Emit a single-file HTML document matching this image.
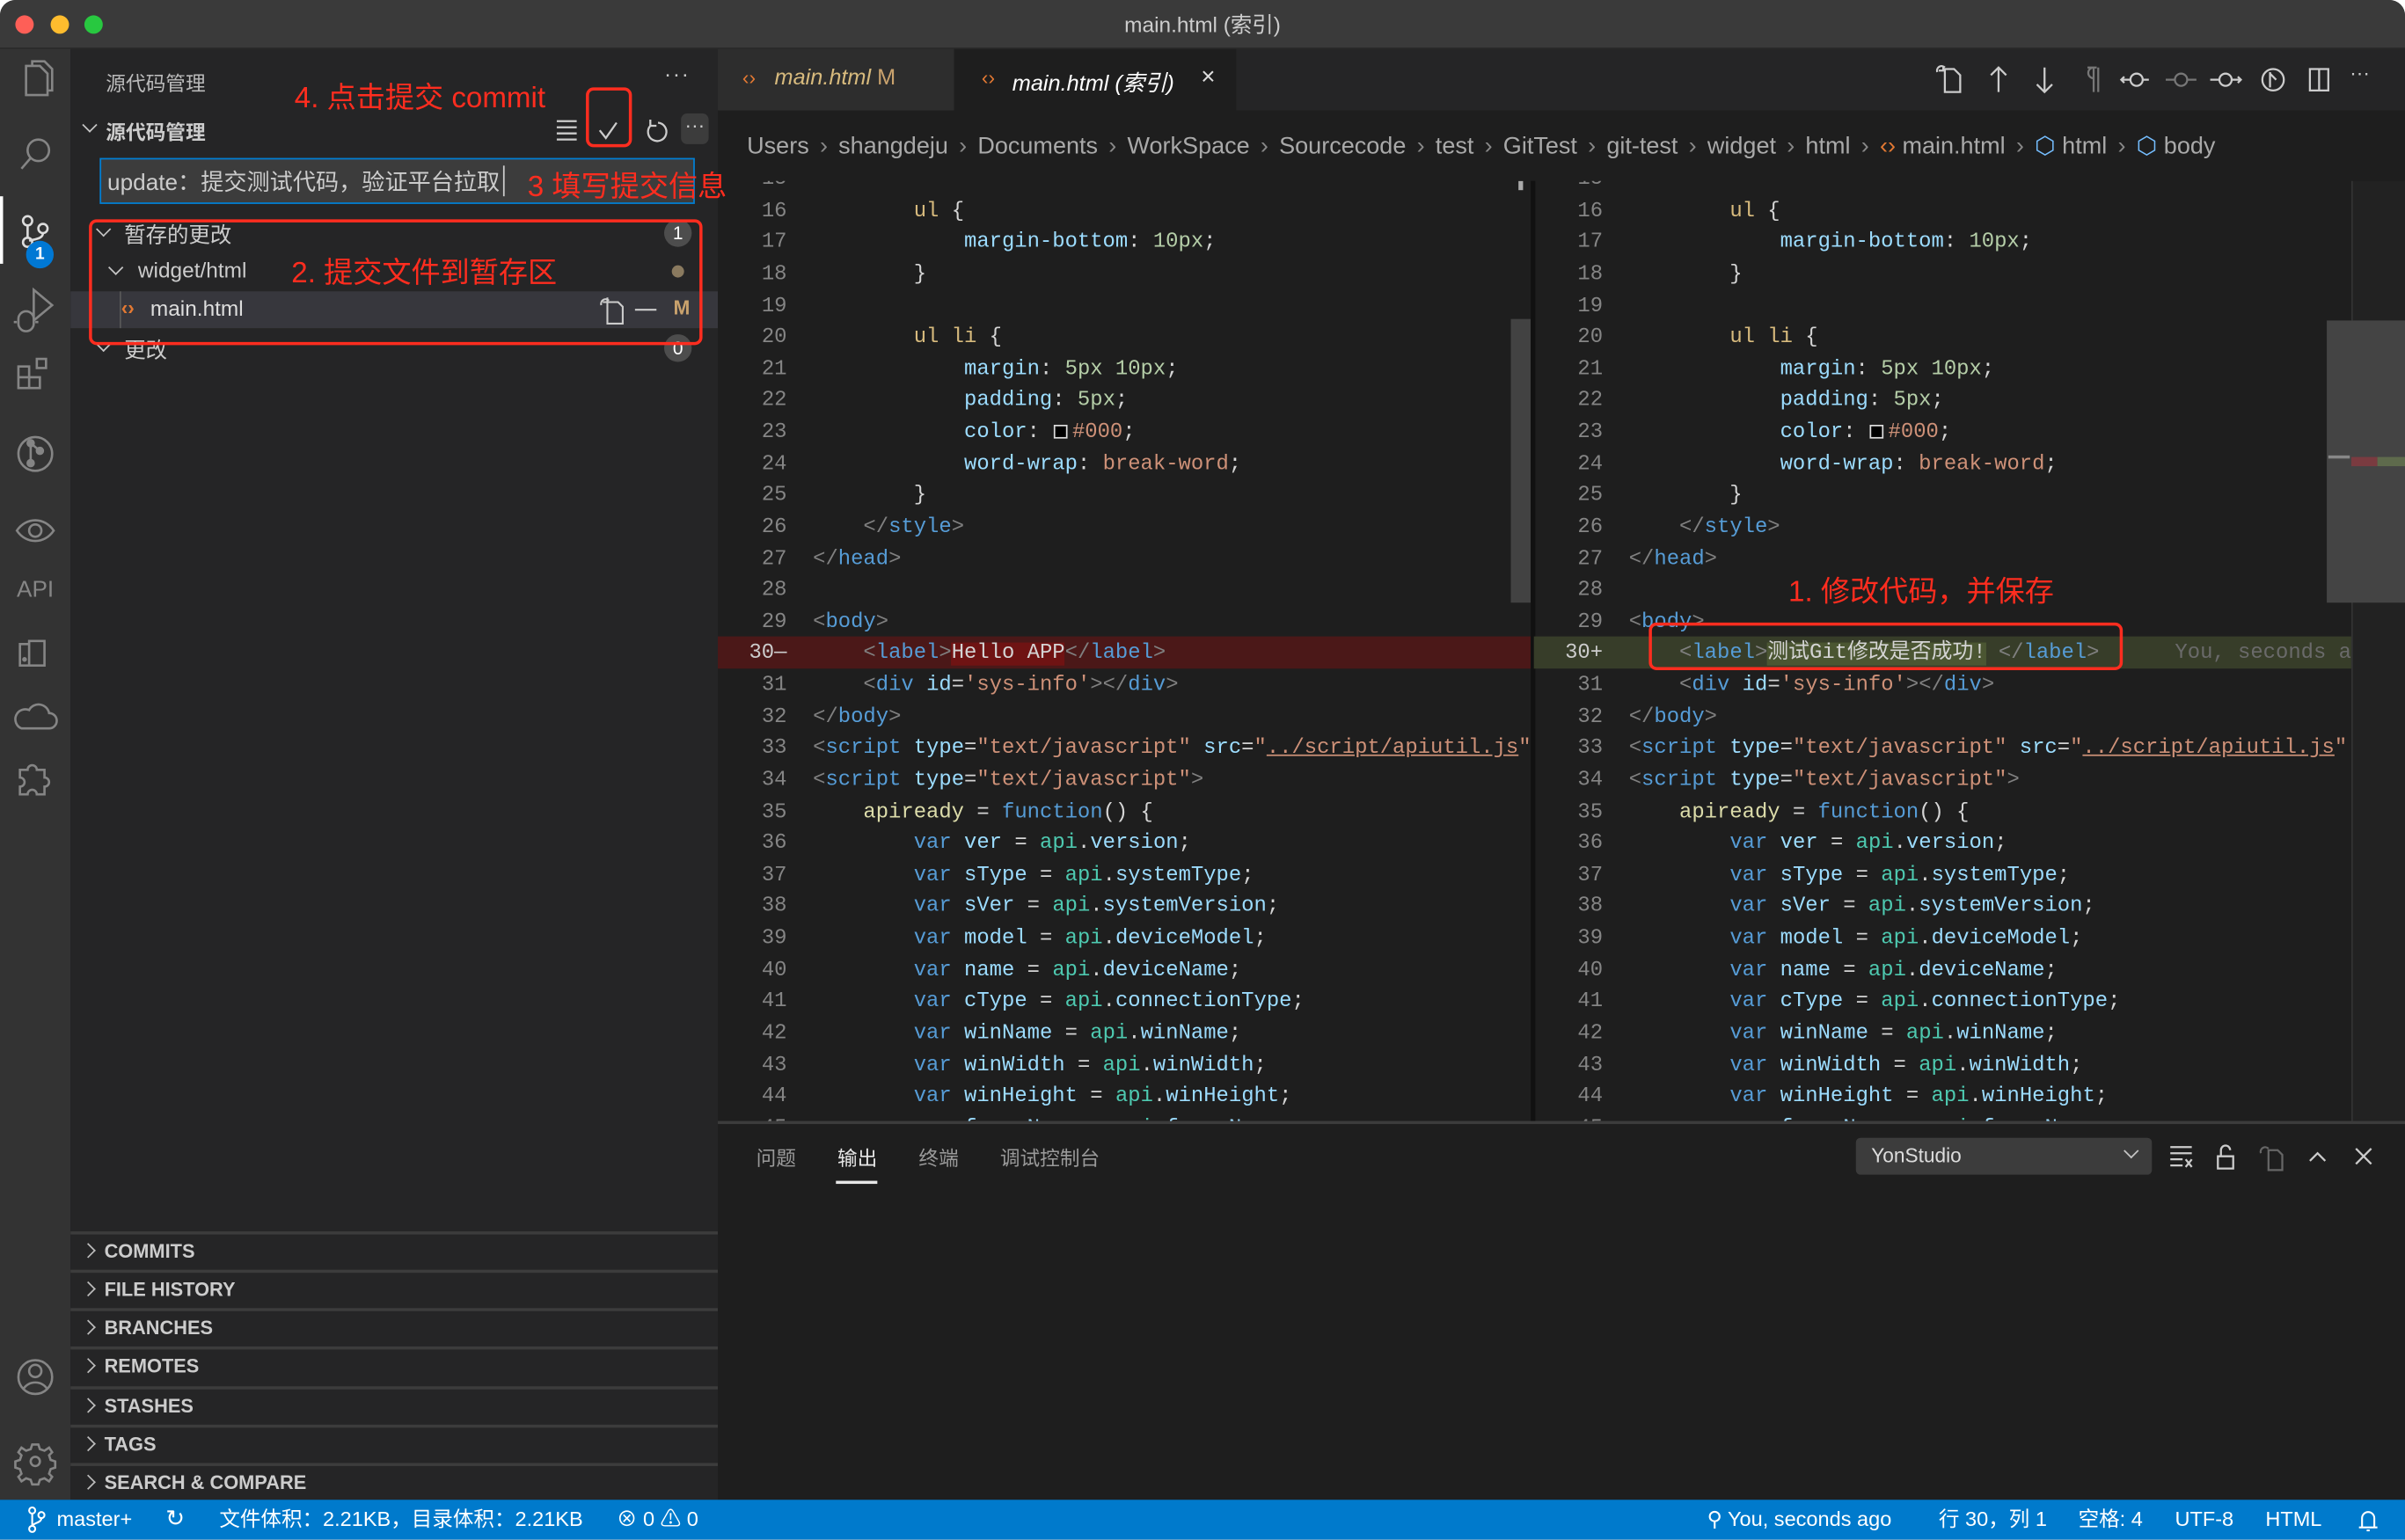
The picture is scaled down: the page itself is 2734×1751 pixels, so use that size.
<!DOCTYPE html>
<html><head><meta charset="utf-8">
<style>
*{box-sizing:border-box;margin:0;padding:0}
html,body{width:2734px;height:1750px;overflow:hidden;background:#fff}
#w{position:absolute;left:0;top:0;width:1568px;height:1004px;transform:scale(1.74362);transform-origin:0 0;background:#1e1e1e;border-radius:10px 10px 0 0;overflow:hidden;font-family:"Liberation Sans","Noto Sans CJK SC",sans-serif;color:#ccc}
.a{position:absolute}
.mono{font-family:"Liberation Mono","Noto Sans CJK SC",monospace;font-size:13.7px}
.red{color:#ff2d1f;font-size:19px;font-family:"Liberation Sans","Noto Sans CJK SC",sans-serif;white-space:nowrap}
.box{position:absolute;border:2.5px solid #ff2d1f;border-radius:5px}
.ln{height:20.64px;line-height:20.64px;position:relative;overflow:visible}
.num{position:absolute;width:45px;text-align:right;color:#858585;left:0;white-space:pre}
.code{position:absolute;left:62px;white-space:pre}
.t{color:#808080}.n{color:#569cd6}.at{color:#9cdcfe}.s{color:#ce9178}.sel{color:#d7ba7d}.nm{color:#b5cea8}.y{color:#dcdcaa}.c{color:#4ec9b0}.wt{color:#d4d4d4}
.sw{display:inline-block;width:9px;height:9px;border:1px solid #ddd;background:#000;margin:0 3px 0 1px;vertical-align:-1px}
.sec{position:absolute;left:46px;width:422px;height:25px;border-top:2px solid #3c3c3c;font-size:12.5px;font-weight:bold;color:#ccc;line-height:23px;padding-left:22px}
.sec:before{content:"";position:absolute;left:8px;top:7px;width:6px;height:6px;border-right:1.3px solid #bbb;border-top:1.3px solid #bbb;transform:rotate(45deg)}
.chev{position:absolute;width:7px;height:7px;border-right:1.3px solid #c5c5c5;border-bottom:1.3px solid #c5c5c5;transform:rotate(45deg)}
.badge{position:absolute;width:18px;height:18px;border-radius:9px;background:#4d4d4d;color:#fff;font-size:12px;text-align:center;line-height:18px}
svg{position:absolute;overflow:visible}
.st{position:absolute;top:0;height:26px;line-height:26px;font-size:13.5px;color:#fff;white-space:nowrap}
.sp{color:#888;margin:0 7px}
</style></head><body><div id="w">

<div class="a" style="left:0;top:0;width:1568px;height:32px;background:#3a3a3a;border-bottom:1px solid #2a2a2a"></div>
<div class="a" style="left:10px;top:10px;width:12px;height:12px;border-radius:6px;background:#fe5f57"></div>
<div class="a" style="left:33px;top:10px;width:12px;height:12px;border-radius:6px;background:#febc2e"></div>
<div class="a" style="left:55px;top:10px;width:12px;height:12px;border-radius:6px;background:#28c840"></div>
<div class="a" style="left:0;width:1568px;top:6px;text-align:center;color:#ccc;font-size:14px">main.html (索引)</div>

<div class="a" style="left:0;top:32px;width:46px;height:946px;background:#333"></div>
<div class="a" style="left:0;top:128px;width:2px;height:44px;background:#fff"></div>
<svg width="46" height="946" style="left:0;top:32px" fill="none" stroke="#858585" stroke-width="1.5">
 <path d="M17 11h9l5 5v14h-14z M21 11v-3h8l5 5v14h-3"/>
 <circle cx="25" cy="66" r="7"/><path d="M20 71l-6 7"/>
 <g stroke="#ddd"><circle cx="18" cy="112" r="3"/><circle cx="28" cy="117" r="3"/><circle cx="18" cy="126" r="3"/><path d="M18 115v8 M28 120c0 4-6 4-9 5"/></g>
 <path d="M22 157l12 10-12 10z M12 176a5 5 0 0 1 10 0v3a5 5 0 0 1-10 0z M11 178h-2 M23 178h2"/>
 <path d="M12 207h7v7h-7z M12 214h7v7h-7z M19 214h7v7h-7z M24 202h6v6h-6z"/>
 <circle cx="23" cy="264" r="11"/><circle cx="20" cy="257" r="2" fill="#858585"/><circle cx="26" cy="262" r="2" fill="#858585"/><circle cx="20" cy="270" r="2" fill="#858585"/><path d="M20 257v13 M20 257l6 5"/>
 <path d="M11 314c6-9 18-9 24 0c-6 9-18 9-24 0z"/><circle cx="23" cy="314" r="4"/>
 <path d="M19 402h-6v-14h6z M19 386h10v16h-10z"/><circle cx="16" cy="398" r="0.8" fill="#858585"/>
 <path d="M14 443h18a5 5 0 0 0 0-10a7 7 0 0 0-13-2a6 6 0 0 0-5 12z"/>
 <path d="M13 470h5a3 3 0 0 1 6 0h5v5a3 3 0 0 1 0 6v5h-5a3 3 0 0 0-6 0h-5v-5a3 3 0 0 0 0-6z"/>
 <circle cx="23" cy="866" r="11"/><circle cx="23" cy="862" r="4"/><path d="M15 874c4-6 12-6 16 0"/>
 <circle cx="23" cy="921" r="3"/><path d="M21 910h4l1 3 3 1 3-2 2 3-2 2 1 3 3 1v4l-3 1-1 3 2 2-2 3-3-2-3 1-1 3h-4l-1-3-3-1-3 2-2-3 2-2-1-3-3-1v-4l3-1 1-3-2-2 2-3 3 2 3-1z"/>
</svg>
<div class="a" style="left:0;top:376px;width:46px;text-align:center;color:#858585;font-size:15px">API</div>
<div class="a" style="left:17px;top:157px;width:18px;height:18px;border-radius:9px;background:#0078d4;color:#fff;font-size:11px;font-weight:bold;text-align:center;line-height:18px">1</div>

<div class="a" style="left:46px;top:32px;width:422px;height:946px;background:#252526"></div>
<div class="a" style="left:69px;top:44px;font-size:13px;color:#bbb">源代码管理</div>
<div class="a" style="left:433px;top:40px;font-size:14px;color:#ccc;letter-spacing:1px">···</div>
<div class="chev" style="left:55px;top:78px"></div>
<div class="a" style="left:69px;top:76px;font-size:13px;font-weight:bold;color:#ccc">源代码管理</div>
<svg width="100" height="30" style="left:360px;top:72px" fill="none" stroke="#ccc" stroke-width="1.3">
 <path d="M3 7h13 M3 11h13 M3 15h13 M3 19h13"/>
 <path d="M31 13l4 5 7-10"/>
 <path d="M69 8a6 6 0 1 1-5 2 M64 6v4h4"/>
</svg>
<div class="a" style="left:444px;top:74px;width:18px;height:20px;background:#3c3c3c;border-radius:4px;color:#ccc;font-size:13px;text-align:center;line-height:16px">···</div>
<div class="a" style="left:65px;top:103px;width:388px;height:30px;background:#3c3c3c;border:1px solid #007fd4"></div>
<div class="a" style="left:70px;top:108px;font-size:15px;color:#ccc;white-space:nowrap">update：提交测试代码，验证平台拉取</div>
<div class="a" style="left:328px;top:108px;width:1px;height:20px;background:#ccc"></div>

<div class="chev" style="left:64px;top:146px"></div>
<div class="a" style="left:81px;top:143px;font-size:14px;color:#ccc">暂存的更改</div>
<div class="badge" style="left:433px;top:143px">1</div>
<div class="chev" style="left:72px;top:171px"></div>
<div class="a" style="left:90px;top:168px;font-size:14px;color:#ccc">widget/html</div>
<div class="a" style="left:438px;top:173px;width:8px;height:8px;border-radius:4px;background:#8a7a5f"></div>
<div class="a" style="left:46px;top:190px;width:422px;height:24px;background:#37373d"></div>
<div class="a" style="left:78px;top:190px;width:1px;height:24px;background:#585858"></div>
<div class="a" style="left:79px;top:193px;font-size:13px;color:#e37933;font-weight:bold">‹›</div>
<div class="a" style="left:98px;top:193px;font-size:14px;color:#ddd">main.html</div>
<svg width="50" height="24" style="left:388px;top:190px" fill="none" stroke="#ccc" stroke-width="1.2"><path d="M8 7h7l3 3v11h-10z M4 9a3 3 0 0 1 5-3 M8 4v3h-3"/><path d="M26 12h14"/></svg>
<div class="a" style="left:439px;top:193px;font-size:13px;color:#c9a26d;font-weight:bold">M</div>
<div class="chev" style="left:64px;top:221px"></div>
<div class="a" style="left:81px;top:218px;font-size:14px;color:#ccc">更改</div>
<div class="badge" style="left:433px;top:218px">0</div>

<div class="sec" style="top:803px">COMMITS</div>
<div class="sec" style="top:828px">FILE HISTORY</div>
<div class="sec" style="top:853px">BRANCHES</div>
<div class="sec" style="top:878px">REMOTES</div>
<div class="sec" style="top:904px">STASHES</div>
<div class="sec" style="top:929px">TAGS</div>
<div class="sec" style="top:954px">SEARCH &amp; COMPARE</div>

<div class="a" style="left:468px;top:32px;width:1100px;height:40px;background:#252526"></div>
<div class="a" style="left:468px;top:32px;width:154px;height:40px;background:#2d2d2d"></div>
<div class="a" style="left:622px;top:32px;width:184px;height:40px;background:#1e1e1e"></div>
<div class="a" style="left:484px;top:43px;font-size:13px;color:#e37933">‹›</div>
<div class="a" style="left:505px;top:43px;font-size:14.5px;color:#d7ba7d;font-style:italic">main.html <span style="font-style:normal;color:#c9a26d">M</span></div>
<div class="a" style="left:640px;top:43px;font-size:13px;color:#e37933">‹›</div>
<div class="a" style="left:660px;top:43px;font-size:14.5px;color:#fff;font-style:italic">main.html (索引)</div>
<div class="a" style="left:783px;top:42px;font-size:16px;color:#ddd">×</div>
<svg width="300" height="40" style="left:1260px;top:32px" fill="none" stroke="#ccc" stroke-width="1.3">
 <path d="M8 13h6l4 4v11h-10z M3 15a3 3 0 0 1 5-3 M7 11v3h-3"/>
 <path d="M43 28v-16 M38 17l5-5 5 5"/>
 <path d="M73 12v16 M68 23l5 5 5-5"/>
 <path stroke="#777" d="M101 12h6 M105 12v16 M108 12v16 M105 12a3 3 0 0 0 0 7"/>
 <circle cx="133" cy="20" r="4"/><path d="M137 20h4 M123 20h6 M125 18l-2 2 2 2"/>
 <circle stroke="#777" cx="162" cy="20" r="4"/><path stroke="#777" d="M152 20h6 M166 20h6"/>
 <circle cx="191" cy="20" r="4"/><path d="M181 20h6 M195 20h6 M199 18l2 2-2 2"/>
 <circle cx="222" cy="20" r="7"/><path d="M220 15v10 M220 16l4 4"/>
 <path d="M246 13h12v14h-12z M252 13v14"/>
</svg>
<div class="a" style="left:1532px;top:40px;color:#ccc;font-size:13px">···</div>

<div class="a" style="left:487px;top:86px;font-size:15.5px;color:#a9a9a9;white-space:nowrap">Users<span class="sp">›</span>shangdeju<span class="sp">›</span>Documents<span class="sp">›</span>WorkSpace<span class="sp">›</span>Sourcecode<span class="sp">›</span>test<span class="sp">›</span>GitTest<span class="sp">›</span>git-test<span class="sp">›</span>widget<span class="sp">›</span>html<span class="sp">›</span><span style="color:#e37933">‹›</span> main.html<span class="sp">›</span><span style="color:#75beff">⬡</span> html<span class="sp">›</span><span style="color:#75beff">⬡</span> body</div>

<div class="a mono" style="left:468px;top:118px;width:530px;height:614px;overflow:hidden">
<div class="a" style="left:0;top:297px;width:530px;height:20.64px;background:#4b1818"></div>
<div style="position:absolute;left:0;top:-10px;width:530px">
<div class="ln"><span class="num">15</span></div>
<div class="ln"><span class="num">16</span><span class="code wt">        <span class="sel">ul</span> {</span></div>
<div class="ln"><span class="num">17</span><span class="code wt">            <span class="at">margin-bottom</span>: <span class="nm">10px</span>;</span></div>
<div class="ln"><span class="num">18</span><span class="code wt">        }</span></div>
<div class="ln"><span class="num">19</span></div>
<div class="ln"><span class="num">20</span><span class="code wt">        <span class="sel">ul li</span> {</span></div>
<div class="ln"><span class="num">21</span><span class="code wt">            <span class="at">margin</span>: <span class="nm">5px 10px</span>;</span></div>
<div class="ln"><span class="num">22</span><span class="code wt">            <span class="at">padding</span>: <span class="nm">5px</span>;</span></div>
<div class="ln"><span class="num">23</span><span class="code wt">            <span class="at">color</span>: <span class="sw"></span><span class="s">#000</span>;</span></div>
<div class="ln"><span class="num">24</span><span class="code wt">            <span class="at">word-wrap</span>: <span class="s">break-word</span>;</span></div>
<div class="ln"><span class="num">25</span><span class="code wt">        }</span></div>
<div class="ln"><span class="num">26</span><span class="code">    <span class="t">&lt;/</span><span class="n">style</span><span class="t">&gt;</span></span></div>
<div class="ln"><span class="num">27</span><span class="code"><span class="t">&lt;/</span><span class="n">head</span><span class="t">&gt;</span></span></div>
<div class="ln"><span class="num">28</span></div>
<div class="ln"><span class="num">29</span><span class="code"><span class="t">&lt;</span><span class="n">body</span><span class="t">&gt;</span></span></div>
<div class="ln"><span class="num" style="color:#ccc">30—</span><span class="code">    <span class="t">&lt;</span><span class="n">label</span><span class="t">&gt;</span><span class="wt" style="background:#6f1313">Hello APP</span><span class="t">&lt;/</span><span class="n">label</span><span class="t">&gt;</span></span></div>
<div class="ln"><span class="num">31</span><span class="code">    <span class="t">&lt;</span><span class="n">div</span> <span class="at">id</span><span class="wt">=</span><span class="s">'sys-info'</span><span class="t">&gt;&lt;/</span><span class="n">div</span><span class="t">&gt;</span></span></div>
<div class="ln"><span class="num">32</span><span class="code"><span class="t">&lt;/</span><span class="n">body</span><span class="t">&gt;</span></span></div>
<div class="ln"><span class="num">33</span><span class="code"><span class="t">&lt;</span><span class="n">script</span> <span class="at">type</span><span class="wt">=</span><span class="s">"text/javascript"</span> <span class="at">src</span><span class="wt">=</span><span class="s">"<u>../script/apiutil.js</u>"</span></span></div>
<div class="ln"><span class="num">34</span><span class="code"><span class="t">&lt;</span><span class="n">script</span> <span class="at">type</span><span class="wt">=</span><span class="s">"text/javascript"</span><span class="t">&gt;</span></span></div>
<div class="ln"><span class="num">35</span><span class="code wt">    <span class="y">apiready</span> = <span class="n">function</span>() {</span></div>
<div class="ln"><span class="num">36</span><span class="code wt">        <span class="n">var</span> <span class="at">ver</span> = <span class="c">api</span>.<span class="at">version</span>;</span></div>
<div class="ln"><span class="num">37</span><span class="code wt">        <span class="n">var</span> <span class="at">sType</span> = <span class="c">api</span>.<span class="at">systemType</span>;</span></div>
<div class="ln"><span class="num">38</span><span class="code wt">        <span class="n">var</span> <span class="at">sVer</span> = <span class="c">api</span>.<span class="at">systemVersion</span>;</span></div>
<div class="ln"><span class="num">39</span><span class="code wt">        <span class="n">var</span> <span class="at">model</span> = <span class="c">api</span>.<span class="at">deviceModel</span>;</span></div>
<div class="ln"><span class="num">40</span><span class="code wt">        <span class="n">var</span> <span class="at">name</span> = <span class="c">api</span>.<span class="at">deviceName</span>;</span></div>
<div class="ln"><span class="num">41</span><span class="code wt">        <span class="n">var</span> <span class="at">cType</span> = <span class="c">api</span>.<span class="at">connectionType</span>;</span></div>
<div class="ln"><span class="num">42</span><span class="code wt">        <span class="n">var</span> <span class="at">winName</span> = <span class="c">api</span>.<span class="at">winName</span>;</span></div>
<div class="ln"><span class="num">43</span><span class="code wt">        <span class="n">var</span> <span class="at">winWidth</span> = <span class="c">api</span>.<span class="at">winWidth</span>;</span></div>
<div class="ln"><span class="num">44</span><span class="code wt">        <span class="n">var</span> <span class="at">winHeight</span> = <span class="c">api</span>.<span class="at">winHeight</span>;</span></div>
<div class="ln"><span class="num">45</span><span class="code wt">        <span class="n">var</span> <span class="at">frameName</span> = <span class="c">api</span>.<span class="at">frameName</span>;</span></div>
</div>
<div class="a" style="left:517px;top:90px;width:13px;height:185px;background:#424242"></div>
<div class="a" style="left:522px;top:0;width:3px;height:6px;background:#aaa"></div>
</div>
<div class="a" style="left:998px;top:118px;width:3px;height:614px;background:#111"></div>

<div class="a mono" style="left:1000px;top:118px;width:533px;height:614px;overflow:hidden">
<div class="a" style="left:0;top:297px;width:533px;height:20.64px;background:#373d29"></div>
<div style="position:absolute;left:0;top:-10px;width:533px">
<div class="ln"><span class="num">15</span></div>
<div class="ln"><span class="num">16</span><span class="code wt">        <span class="sel">ul</span> {</span></div>
<div class="ln"><span class="num">17</span><span class="code wt">            <span class="at">margin-bottom</span>: <span class="nm">10px</span>;</span></div>
<div class="ln"><span class="num">18</span><span class="code wt">        }</span></div>
<div class="ln"><span class="num">19</span></div>
<div class="ln"><span class="num">20</span><span class="code wt">        <span class="sel">ul li</span> {</span></div>
<div class="ln"><span class="num">21</span><span class="code wt">            <span class="at">margin</span>: <span class="nm">5px 10px</span>;</span></div>
<div class="ln"><span class="num">22</span><span class="code wt">            <span class="at">padding</span>: <span class="nm">5px</span>;</span></div>
<div class="ln"><span class="num">23</span><span class="code wt">            <span class="at">color</span>: <span class="sw"></span><span class="s">#000</span>;</span></div>
<div class="ln"><span class="num">24</span><span class="code wt">            <span class="at">word-wrap</span>: <span class="s">break-word</span>;</span></div>
<div class="ln"><span class="num">25</span><span class="code wt">        }</span></div>
<div class="ln"><span class="num">26</span><span class="code">    <span class="t">&lt;/</span><span class="n">style</span><span class="t">&gt;</span></span></div>
<div class="ln"><span class="num">27</span><span class="code"><span class="t">&lt;/</span><span class="n">head</span><span class="t">&gt;</span></span></div>
<div class="ln"><span class="num">28</span></div>
<div class="ln"><span class="num">29</span><span class="code"><span class="t">&lt;</span><span class="n">body</span><span class="t">&gt;</span></span></div>
<div class="ln"><span class="num" style="color:#ccc">30+</span><span class="code">    <span class="t">&lt;</span><span class="n">label</span><span class="t">&gt;</span><span class="wt" style="background:#4b5632">测试Git修改是否成功!</span> <span class="t">&lt;/</span><span class="n">label</span><span class="t">&gt;</span>      <span style="color:#6a6a6a">You, seconds ago</span></span></div>
<div class="ln"><span class="num">31</span><span class="code">    <span class="t">&lt;</span><span class="n">div</span> <span class="at">id</span><span class="wt">=</span><span class="s">'sys-info'</span><span class="t">&gt;&lt;/</span><span class="n">div</span><span class="t">&gt;</span></span></div>
<div class="ln"><span class="num">32</span><span class="code"><span class="t">&lt;/</span><span class="n">body</span><span class="t">&gt;</span></span></div>
<div class="ln"><span class="num">33</span><span class="code"><span class="t">&lt;</span><span class="n">script</span> <span class="at">type</span><span class="wt">=</span><span class="s">"text/javascript"</span> <span class="at">src</span><span class="wt">=</span><span class="s">"<u>../script/apiutil.js</u>"</span></span></div>
<div class="ln"><span class="num">34</span><span class="code"><span class="t">&lt;</span><span class="n">script</span> <span class="at">type</span><span class="wt">=</span><span class="s">"text/javascript"</span><span class="t">&gt;</span></span></div>
<div class="ln"><span class="num">35</span><span class="code wt">    <span class="y">apiready</span> = <span class="n">function</span>() {</span></div>
<div class="ln"><span class="num">36</span><span class="code wt">        <span class="n">var</span> <span class="at">ver</span> = <span class="c">api</span>.<span class="at">version</span>;</span></div>
<div class="ln"><span class="num">37</span><span class="code wt">        <span class="n">var</span> <span class="at">sType</span> = <span class="c">api</span>.<span class="at">systemType</span>;</span></div>
<div class="ln"><span class="num">38</span><span class="code wt">        <span class="n">var</span> <span class="at">sVer</span> = <span class="c">api</span>.<span class="at">systemVersion</span>;</span></div>
<div class="ln"><span class="num">39</span><span class="code wt">        <span class="n">var</span> <span class="at">model</span> = <span class="c">api</span>.<span class="at">deviceModel</span>;</span></div>
<div class="ln"><span class="num">40</span><span class="code wt">        <span class="n">var</span> <span class="at">name</span> = <span class="c">api</span>.<span class="at">deviceName</span>;</span></div>
<div class="ln"><span class="num">41</span><span class="code wt">        <span class="n">var</span> <span class="at">cType</span> = <span class="c">api</span>.<span class="at">connectionType</span>;</span></div>
<div class="ln"><span class="num">42</span><span class="code wt">        <span class="n">var</span> <span class="at">winName</span> = <span class="c">api</span>.<span class="at">winName</span>;</span></div>
<div class="ln"><span class="num">43</span><span class="code wt">        <span class="n">var</span> <span class="at">winWidth</span> = <span class="c">api</span>.<span class="at">winWidth</span>;</span></div>
<div class="ln"><span class="num">44</span><span class="code wt">        <span class="n">var</span> <span class="at">winHeight</span> = <span class="c">api</span>.<span class="at">winHeight</span>;</span></div>
<div class="ln"><span class="num">45</span><span class="code wt">        <span class="n">var</span> <span class="at">frameName</span> = <span class="c">api</span>.<span class="at">frameName</span>;</span></div>
</div>
</div>
<div class="a" style="left:1533px;top:118px;width:35px;height:614px;background:#222;border-left:1px solid #333"></div>
<div class="a" style="left:1517px;top:209px;width:51px;height:184px;background:#444"></div>
<div class="a" style="left:1518px;top:297px;width:14px;height:2px;background:#888"></div>
<div class="a" style="left:1533px;top:298px;width:17px;height:6px;background:#7a3b40"></div>
<div class="a" style="left:1550px;top:298px;width:18px;height:6px;background:#5e6a4c"></div>

<div class="a" style="left:468px;top:731px;width:1100px;height:2px;background:#3c3c3c"></div>
<div class="a" style="left:493px;top:745px;font-size:13px;color:#999;white-space:nowrap">问题</div>
<div class="a" style="left:546px;top:745px;font-size:13px;color:#e7e7e7">输出</div>
<div class="a" style="left:545px;top:770px;width:27px;height:1.5px;background:#e7e7e7"></div>
<div class="a" style="left:599px;top:745px;font-size:13px;color:#999">终端</div>
<div class="a" style="left:652px;top:745px;font-size:13px;color:#999">调试控制台</div>
<div class="a" style="left:1210px;top:742px;width:193px;height:24px;background:#3c3c3c;border-radius:3px"></div>
<div class="a" style="left:1220px;top:746px;font-size:13px;color:#ddd">YonStudio</div>
<div class="chev" style="left:1386px;top:747px"></div>
<svg width="150" height="30" style="left:1410px;top:740px" fill="none" stroke="#ccc" stroke-width="1.3">
 <path d="M5 8h14 M5 12h14 M5 16h8 M5 20h8 M15 16l4 5 M19 16l-4 5"/>
 <path d="M36 14h10v8h-10z M38 14v-4a3 3 0 0 1 6 0"/>
 <path stroke="#666" d="M69 10h6l3 3v10h-9z M64 12a3 3 0 0 1 5-3"/>
 <path d="M96 17l5-5 5 5"/>
 <path d="M126 9l10 10 M136 9l-10 10"/>
</svg>

<div class="a" style="left:0;top:978px;width:1568px;height:26px;background:#007acc"></div>
<div class="a" style="left:0;top:978px;width:1568px;height:26px">
<svg width="30" height="26" style="left:14px;top:0" fill="none" stroke="#fff" stroke-width="1.2"><circle cx="7" cy="7" r="2"/><circle cx="13" cy="10" r="2"/><circle cx="7" cy="19" r="2"/><path d="M7 9v8 M13 12c0 3-5 3-6 5"/></svg>
<div class="st" style="left:37px">master+</div>
<div class="st" style="left:108px;font-size:15px">↻</div>
<div class="st" style="left:143px">文件体积：2.21KB，目录体积：2.21KB</div>
<div class="st" style="left:402px">⊗ 0 ⚠ 0</div>
<div class="st" style="left:1113px">⚲ You, seconds ago</div>
<div class="st" style="left:1264px">行 30，列 1</div>
<div class="st" style="left:1355px">空格: 4</div>
<div class="st" style="left:1418px">UTF-8</div>
<div class="st" style="left:1477px">HTML</div>
<svg width="20" height="26" style="left:1535px;top:0" fill="none" stroke="#fff" stroke-width="1.2"><path d="M3 18h12 M5 18v-6a4 4 0 0 1 8 0v6 M8 20h2"/></svg>
</div>

<div class="a red" style="left:192px;top:49px">4. 点击提交 commit</div>
<div class="box" style="left:382px;top:57px;width:30px;height:39px"></div>
<div class="a red" style="left:344px;top:107px">3 填写提交信息</div>
<div class="box" style="left:58px;top:143px;width:400px;height:82px"></div>
<div class="a red" style="left:190px;top:163px">2. 提交文件到暂存区</div>
<div class="a red" style="left:1166px;top:371px">1. 修改代码，并保存</div>
<div class="box" style="left:1075px;top:406px;width:309px;height:31px"></div>

</div></body></html>
